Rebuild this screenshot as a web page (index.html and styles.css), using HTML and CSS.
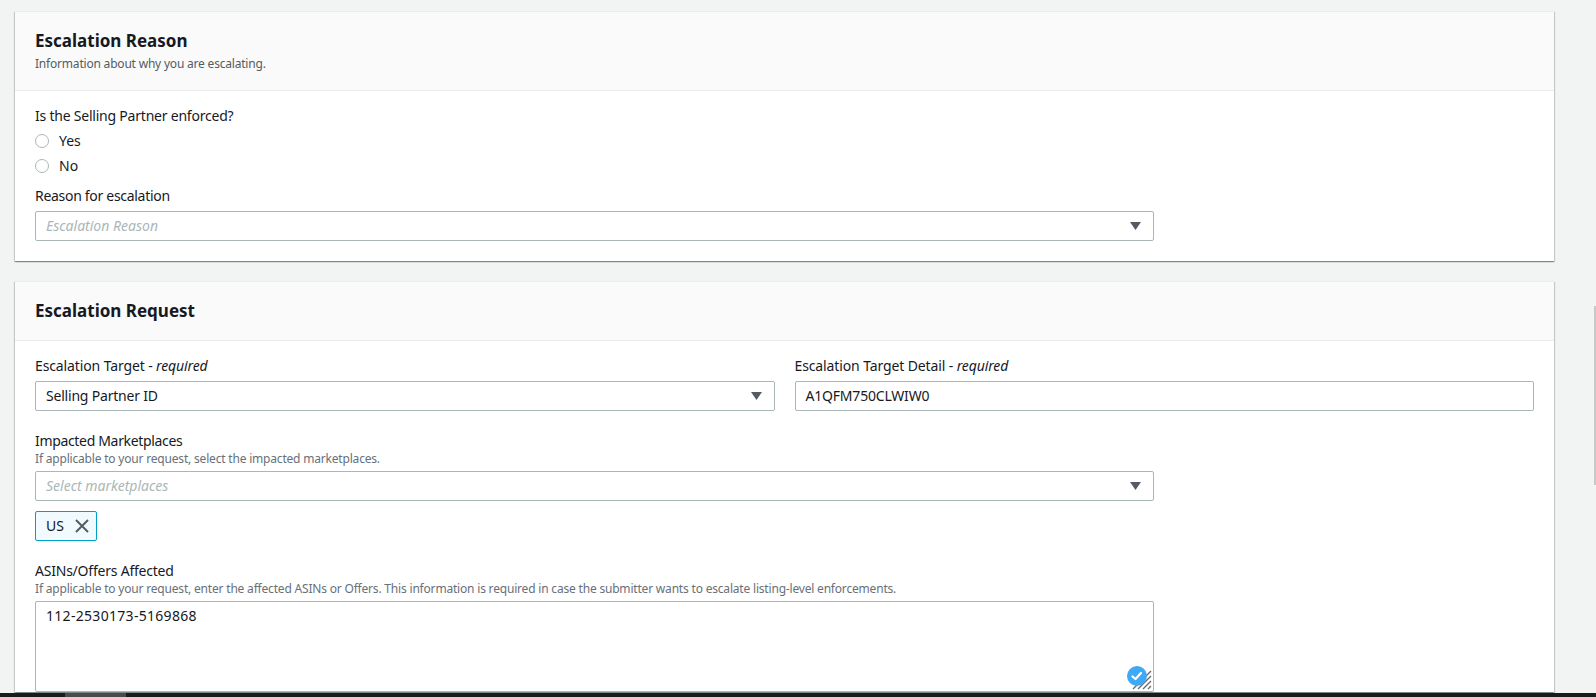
FILE: index.html
```html
<!DOCTYPE html>
<html lang="en">
<head>
<meta charset="utf-8">
<title>Escalation</title>
<link rel="stylesheet" href="styles.css">
</head>
<body>
<div class="page">
  <main class="content">
    <section class="panel panel-reason">
      <header class="panel-head head-reason">
        <h2 class="panel-title">Escalation Reason</h2>
        <p class="panel-desc">Information about why you are escalating.</p>
      </header>
      <div class="panel-body body-reason">
        <div class="label">Is the Selling Partner enforced?</div>
        <div class="radio-row radio-first"><span class="radio"></span><span>Yes</span></div>
        <div class="radio-row"><span class="radio"></span><span>No</span></div>
        <div class="label label-reason">Reason for escalation</div>
        <div class="control select wide">
          <span class="placeholder">Escalation Reason</span>
          <svg class="caret" width="11" height="8" viewBox="0 0 11 8"><path d="M0 0h11L5.5 8z"/></svg>
        </div>
      </div>
    </section>

    <section class="panel panel-request">
      <header class="panel-head head-request">
        <h2 class="panel-title">Escalation Request</h2>
      </header>
      <div class="panel-body body-request">
        <div class="two-col">
          <div class="field">
            <div class="label label-target">Escalation Target - <em>required</em></div>
            <div class="control select">
              <span class="value">Selling Partner ID</span>
              <svg class="caret" width="11" height="8" viewBox="0 0 11 8"><path d="M0 0h11L5.5 8z"/></svg>
            </div>
          </div>
          <div class="field">
            <div class="label label-target">Escalation Target Detail - <em>required</em></div>
            <div class="control"><span class="value">A1QFM750CLWIW0</span></div>
          </div>
        </div>

        <div class="label label-market">Impacted Marketplaces</div>
        <div class="hint">If applicable to your request, select the impacted marketplaces.</div>
        <div class="control select wide">
          <span class="placeholder">Select marketplaces</span>
          <svg class="caret" width="11" height="8" viewBox="0 0 11 8"><path d="M0 0h11L5.5 8z"/></svg>
        </div>
        <div class="tag">
          <span>US</span>
          <svg class="tag-x" width="16" height="16" viewBox="0 0 16 16"><path d="M2 2l12 12M14 2L2 14"/></svg>
        </div>

        <div class="label label-asin">ASINs/Offers Affected</div>
        <div class="hint">If applicable to your request, enter the affected ASINs or Offers. This information is required in case the submitter wants to escalate listing-level enforcements.</div>
        <div class="textarea wide">
          112-2530173-5169868
          <svg class="resizer" width="20" height="20" viewBox="0 0 20 20"><path d="M1 19L19 1M6 19L19 6M11 19l8-8M16 19l3-3"/></svg>
          <svg class="check" width="20" height="20" viewBox="0 0 20 20"><circle cx="10" cy="10" r="10"/><path d="M5.5 10.5l3 2.5 5.5-6"/></svg>
        </div>
      </div>
    </section>
  </main>
  <footer class="taskbar"><span class="taskbar-item"></span></footer>
</div>
<div class="scrollbar"></div>
</body>
</html>
```

FILE: styles.css
```css
* { box-sizing: border-box; }
html, body { margin: 0; height: 100%; overflow: hidden; }
body {
  background: #f2f3f3;
  color: #16191f;
  font-family: "Noto Sans", "Open Sans", sans-serif;
  font-size: 14px;
  line-height: 20px;
}
.page { height: 697px; display: flex; flex-direction: column; }
.content { flex: 1; min-height: 0; overflow: hidden; padding: 11px 42px 0 15px; }
.panel {
  background: #fff;
  border-top: 1px solid #eaeded;
  box-shadow: 0 1px 1px 0 rgba(0,28,36,.3), 1px 1px 1px 0 rgba(0,28,36,.15), -1px 1px 1px 0 rgba(0,28,36,.15);
}
.panel-reason { height: 250px; }
.panel-request { margin-top: 20px; }
.panel-head { background: #fafafa; border-bottom: 1px solid #eaeded; padding: 0 20px; }
.head-reason { height: 79px; padding-top: 18px; }
.head-request { height: 59px; padding-top: 18px; }
.panel-title { margin: 0; font-size: 17px; line-height: 22px; font-weight: 700; }
.panel-desc { margin: 4px 0 0; font-size: 12px; line-height: 16px; color: #545b64; letter-spacing: -.2px; }
.panel-body { padding: 0 20px; }
.body-reason { padding-top: 15px; }
.body-request { padding-top: 15px; }
.label { font-size: 14px; line-height: 20px; letter-spacing: -.22px; }
.label em { font-style: italic; }
.radio-row { display: flex; align-items: center; gap: 10px; height: 25px; }
.radio-first { margin-top: 2px; }
.radio { width: 14px; height: 14px; border: 1px solid #aab7b8; border-radius: 50%; background: #fff; }
.label-reason { margin-top: 8px; margin-bottom: 5px; letter-spacing: -.3px; }
.control {
  display: flex;
  align-items: center;
  justify-content: space-between;
  height: 30px;
  padding: 0 12px 0 10px;
  border: 1px solid #aab7b8;
  border-radius: 2px;
  background: #fff;
}
.wide { width: 1119px; }
.value { letter-spacing: -.2px; }
.placeholder { color: #aab7b8; font-style: italic; }
.caret { fill: #545b64; display: block; }
.two-col { display: grid; grid-template-columns: 1fr 1fr; gap: 20px; }
.field .label { margin-bottom: 5px; }
.label-target { letter-spacing: -.12px; }
.label-market { margin-top: 20px; letter-spacing: -.33px; }
.hint { font-size: 12px; line-height: 16px; color: #687078; margin-bottom: 4px; letter-spacing: -.19px; }
.tag {
  display: inline-flex;
  align-items: center;
  gap: 10px;
  margin-top: 10px;
  height: 30px;
  padding: 0 6px 0 10px;
  border: 1px solid #00a1c9;
  border-radius: 2px;
  background: #f1faff;
  vertical-align: top;
}
.tag-x { fill: none; stroke: #545b64; stroke-width: 2; display: block; }
.label-asin { margin-top: 20px; }
.textarea {
  position: relative;
  height: 91px;
  padding: 4px 10px;
  border: 1px solid #aab7b8;
  border-radius: 2px;
  background: #fff;
  letter-spacing: .3px;
}
.resizer { position: absolute; right: 1px; bottom: 1px; fill: none; stroke: #6b6b6b; stroke-width: 1.4; }
.check { position: absolute; right: 6px; bottom: 5px; }
.check circle { fill: #3fa9f5; }
.check path { fill: none; stroke: #fff; stroke-width: 2.2; stroke-linecap: round; stroke-linejoin: round; }
.taskbar { flex: none; height: 4px; background: #1a1a1a; padding-left: 65px; }
.taskbar-item { display: block; width: 61px; height: 4px; background: #4a4a4a; }
.scrollbar { position: absolute; right: 0; top: 306px; width: 2px; height: 179px; background: #c8c8c8; }
```
